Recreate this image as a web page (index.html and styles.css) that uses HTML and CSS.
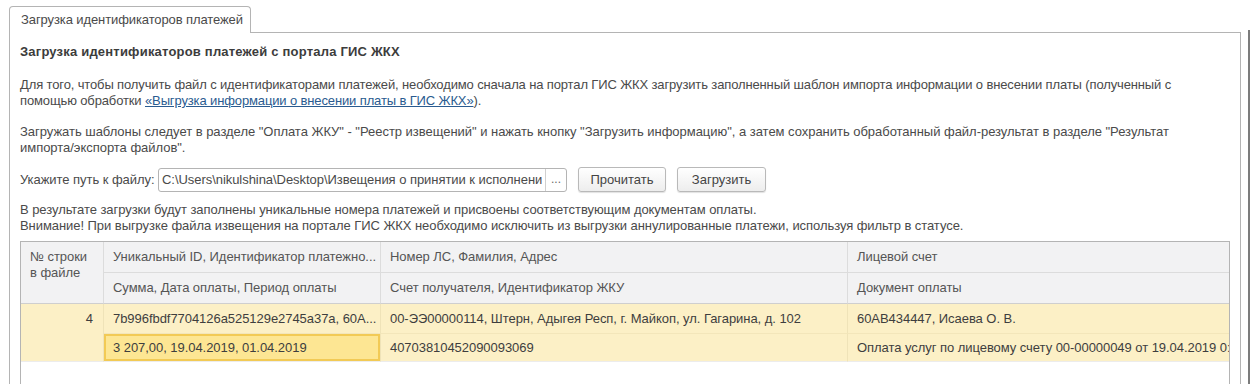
FILE: index.html
```html
<!DOCTYPE html>
<html lang="ru">
<head>
<meta charset="utf-8">
<title>Загрузка идентификаторов платежей</title>
<link rel="stylesheet" href="styles.css">
</head>
<body>
<div class="screen">
  <div class="main">
    <div class="tabs">
      <div class="tab">Загрузка идентификаторов платежей</div>
    </div>
    <div class="panel">
      <div class="heading">Загрузка идентификаторов платежей с портала ГИС ЖКХ</div>
      <p class="para p1">Для того, чтобы получить файл с идентификаторами платежей, необходимо сначала на портал ГИС ЖКХ загрузить заполненный шаблон импорта информации о внесении платы (полученный с<br>помощью обработки <a class="link" href="#">«Выгрузка информации о внесении платы в ГИС ЖКХ»</a>).</p>
      <p class="para p2">Загружать шаблоны следует в разделе "Оплата ЖКУ" - "Реестр извещений" и нажать кнопку "Загрузить информацию", а затем сохранить обработанный файл-результат в разделе "Результат<br>импорта/экспорта файлов".</p>
      <div class="filerow">
        <span class="label">Укажите путь к файлу:</span>
        <div class="input">
          <span class="input-text">C:\Users\nikulshina\Desktop\Извещения о принятии к исполнени</span>
          <span class="input-btn">...</span>
        </div>
        <button class="btn btn-read">Прочитать</button>
        <button class="btn btn-load">Загрузить</button>
      </div>
      <p class="para p3">В результате загрузки будут заполнены уникальные номера платежей и присвоены соответствующим документам оплаты.<br>Внимание! При выгрузке файла извещения на портале ГИС ЖКХ необходимо исключить из выгрузки аннулированные платежи, используя фильтр в статусе.</p>
      <div class="grid">
        <div class="cell head h-num">№ строки<br>в файле</div>
        <div class="cell head top c2">Уникальный ID, Идентификатор платежно...</div>
        <div class="cell head top c3">Номер ЛС, Фамилия, Адрес</div>
        <div class="cell head top c4">Лицевой счет</div>
        <div class="cell head bot c2">Сумма, Дата оплаты, Период оплаты</div>
        <div class="cell head bot c3">Счет получателя, Идентификатор ЖКУ</div>
        <div class="cell head bot c4">Документ оплаты</div>
        <div class="cell data d-num">4</div>
        <div class="cell data r1 c2">7b996fbdf7704126a525129e2745a37a, 60А...</div>
        <div class="cell data r1 c3">00-ЭЭ00000114, Штерн, Адыгея Респ, г. Майкоп, ул. Гагарина, д. 102</div>
        <div class="cell data r1 c4">60АВ434447, Исаева О. В.</div>
        <div class="cell data r2 c2 selected">3 207,00, 19.04.2019, 01.04.2019</div>
        <div class="cell data r2 c3">40703810452090093069</div>
        <div class="cell data r2 c4">Оплата услуг по лицевому счету 00-00000049 от 19.04.2019 0:00:00</div>
        <div class="filler"></div>
      </div>
    </div>
  </div>
  <div class="edge"></div>
</div>
</body>
</html>
```
FILE: styles.css
```css
html, body {
  margin: 0;
  padding: 0;
  background: #ffffff;
}

body {
  font-family: "Liberation Sans", Arial, sans-serif;
  font-size: 13px;
  line-height: 16px;
  letter-spacing: -0.05px;
  color: #4a4a4a;
}

.screen {
  display: flex;
  height: 384px;
  overflow: hidden;
}

.main {
  flex: 1;
  display: flex;
  flex-direction: column;
  padding: 6px 7px 0 9px;
  min-width: 0;
}

.edge {
  width: 2px;
  margin: 30px 1px 0 0;
  background: #7c7c7c;
}

.tabs {
  display: flex;
}

.tab {
  position: relative;
  z-index: 1;
  width: 229px;
  padding: 5px 0 5px 11px;
  border: 1px solid #b4b4b4;
  border-bottom: none;
  border-radius: 4px 4px 0 0;
  background: #ffffff;
  margin-bottom: -1px;
  color: #4a4a4a;
  letter-spacing: -0.1px;
}

.panel {
  flex: 1;
  display: flex;
  flex-direction: column;
  border: 1px solid #b4b4b4;
  border-bottom: none;
  padding: 11px 10px 0 10px;
  min-height: 0;
}

.heading {
  font-weight: bold;
  color: #3c3c3c;
  letter-spacing: 0.2px;
}

.para {
  margin: 0;
}

.p1 {
  margin-top: 17px;
  letter-spacing: -0.13px;
}

.p2 {
  margin-top: 15px;
  letter-spacing: -0.03px;
}

.p3 {
  margin-top: 10px;
  letter-spacing: -0.06px;
}

.link {
  color: #2a5b90;
  text-decoration: underline;
}

.filerow {
  display: flex;
  align-items: center;
  margin-top: 11px;
  height: 25px;
}

.label {
  width: 138px;
}

.input {
  display: flex;
  width: 407px;
  height: 22px;
  border: 1px solid #b4b4b4;
  border-radius: 3px;
  background: #ffffff;
}

.input-text {
  flex: 1;
  min-width: 0;
  overflow: hidden;
  white-space: nowrap;
  padding: 3px 0 0 3px;
  color: #4a4a4a;
}

.input-btn {
  width: 20px;
  border-left: 1px solid #d0d0d0;
  text-align: center;
  color: #6a6a6a;
  padding-top: 2px;
  font-size: 12px;
}

.btn {
  height: 25px;
  margin-left: 11px;
  padding: 0;
  border: 1px solid #b9b9b9;
  border-radius: 3px;
  background: linear-gradient(#ffffff, #ededed);
  box-shadow: 0 1px 1px rgba(0, 0, 0, 0.12);
  font-family: "Liberation Sans", Arial, sans-serif;
  font-size: 13px;
  color: #444444;
}

.btn-read {
  width: 88px;
}

.btn-load {
  width: 89px;
}

.grid {
  margin-top: 7px;
  flex: 1;
  display: grid;
  grid-template-columns: 83px 277px 467px 1fr;
  grid-template-rows: 31px 31px 30px 28px 1fr;
  border: 1px solid #b4b4b4;
  border-bottom: none;
  min-height: 0;
}

.cell {
  white-space: nowrap;
  overflow: hidden;
  padding: 0 9px;
  display: flex;
  align-items: center;
}

.head {
  background: #f2f2f3;
  color: #555555;
}

.h-num {
  grid-column: 1;
  grid-row: 1 / 3;
  align-items: flex-start;
  padding-top: 7px;
  border-right: 1px solid #dcdcdc;
  border-bottom: 1px solid #cfcfcf;
  white-space: normal;
}

.top {
  grid-row: 1;
  border-bottom: 1px solid #dcdcdc;
}

.bot {
  grid-row: 2;
  border-bottom: 1px solid #cfcfcf;
}

.c2 {
  grid-column: 2;
  border-right: 1px solid #dcdcdc;
}

.c3 {
  grid-column: 3;
  border-right: 1px solid #dcdcdc;
}

.c4 {
  grid-column: 4;
}

.data {
  background: #fcf0c6;
  color: #3e3e3e;
}

.data.c2,
.data.c3 {
  border-right-color: #efe3b8;
}

.d-num {
  grid-column: 1;
  grid-row: 3 / 5;
  justify-content: flex-end;
  align-items: flex-start;
  padding-top: 7px;
  padding-right: 10px;
  border-right: 1px solid #efe3b8;
  border-bottom: 1px solid #ececec;
}

.r1 {
  grid-row: 3;
  border-bottom: 1px solid #f3e6ba;
}

.r2 {
  grid-row: 4;
  border-bottom: 1px solid #ececec;
}

.selected {
  background: #fde693;
  box-shadow: inset 0 0 0 2px #f2ca55;
}

.filler {
  grid-column: 1 / 5;
  grid-row: 5;
}
```
